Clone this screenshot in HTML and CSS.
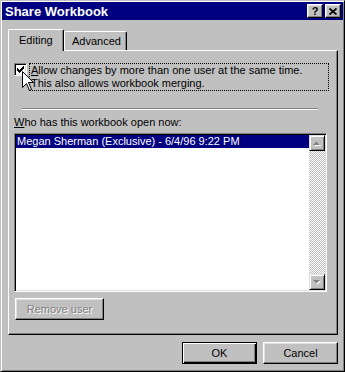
FILE: index.html
```html
<!DOCTYPE html>
<html lang="en">
<head>
  <meta charset="UTF-8" />
  <title>Share Workbook</title>
  <link rel="stylesheet" href="styles.css">
</head>
<body>
  <div class="window">
    <!-- Title bar -->
    <div class="titlebar">
      <span class="title">Share Workbook</span>
      <div class="title-buttons">
        <span class="tbtn help">?</span>
        <span class="tbtn close">
          <svg width="8" height="7" viewBox="0 0 8 7">
            <path d="M0.5 0.5 L7.5 6.5 M7.5 0.5 L0.5 6.5" stroke="#000" stroke-width="1.7" fill="none" />
          </svg>
        </span>
      </div>
    </div>

    <div class="content">
      <!-- Tabs -->
      <div class="tabs">
        <div class="tab active">Editing</div>
        <div class="tab">Advanced</div>
      </div>

      <div class="panel">
        <div class="check-row">
          <span class="checkbox">
            <svg width="7" height="7" viewBox="0 0 7 7" shape-rendering="crispEdges">
              <path d="M6 0h1v3h-1v1h-1v1h-1v1h-1v1h-1v-1h-1v-1h-1v-3h1v1h1v1h1v-1h1v-1h1z" fill="#000" />
            </svg>
          </span>
          <div class="check-label">
            <u>A</u>llow changes by more than one user at the same time.<br>
            This also allows workbook merging.
          </div>
          <svg class="cursor" width="12" height="20" viewBox="0 0 12 20">
            <path d="M0.5 0.5 V16.5 L4.5 12.5 L7.5 19.5 L9.5 18.5 L6.5 11.5 H11.5 Z" fill="#fff" stroke="#000" stroke-width="1" />
          </svg>
        </div>

        <div class="separator"></div>

        <div class="list-label"><u>W</u>ho has this workbook open now:</div>

        <div class="listbox">
          <div class="list-items">
            <div class="list-item selected">Megan Sherman (Exclusive) - 6/4/96 9:22 PM</div>
          </div>
          <div class="scrollbar">
            <span class="scroll-btn">
              <svg width="8" height="5" viewBox="0 0 8 5">
                <polygon points="1,5 8,5 4.5,1.5" fill="#fff" />
                <polygon points="0,4 7,4 3.5,0.5" fill="#808080" />
              </svg>
            </span>
            <span class="scroll-track"></span>
            <span class="scroll-btn">
              <svg width="8" height="5" viewBox="0 0 8 5">
                <polygon points="1,1 8,1 4.5,4.5" fill="#fff" />
                <polygon points="0,0 7,0 3.5,3.5" fill="#808080" />
              </svg>
            </span>
          </div>
        </div>

        <button class="btn remove" disabled>Remove user</button>
      </div>

      <div class="footer">
        <button class="btn default">OK</button>
        <button class="btn">Cancel</button>
      </div>
    </div>
  </div>
</body>
</html>
```

FILE: styles.css
```css
* {
  box-sizing: border-box;
}

html, body {
  margin: 0;
  padding: 0;
  background: #c0c0c0;
}

body {
  font-family: "Liberation Sans", Arial, sans-serif;
  font-size: 11px;
  color: #000;
}

.window {
  width: 345px;
  height: 372px;
  background: #c0c0c0;
  border: 1px solid;
  border-color: #c0c0c0 #000 #000 #c0c0c0;
  box-shadow: inset 1px 1px #fff, inset -1px -1px #808080;
  padding: 1px;
  display: flex;
  flex-direction: column;
}

/* Title bar */
.titlebar {
  height: 18px;
  background: #000080;
  color: #fff;
  display: flex;
  align-items: center;
  justify-content: space-between;
  padding: 0 2px 0 3px;
}

.title {
  font-size: 13px;
  font-weight: bold;
}

.title-buttons {
  display: flex;
  gap: 2px;
}

.tbtn {
  width: 16px;
  height: 14px;
  background: #c0c0c0;
  border: 1px solid;
  border-color: #fff #000 #000 #fff;
  box-shadow: inset -1px -1px #808080, inset 1px 1px #dfdfdf;
  display: flex;
  align-items: center;
  justify-content: center;
  color: #000;
  font-weight: bold;
  font-size: 11px;
  line-height: 1;
}

/* Dialog content */
.content {
  flex: 1;
  padding: 9px 5px 0 6px;
  display: flex;
  flex-direction: column;
}

.tabs {
  display: flex;
  align-items: flex-end;
  height: 21px;
}

.tab {
  height: 19px;
  border: 1px solid;
  border-bottom: none;
  border-color: #fff #000 #000 #fff;
  border-radius: 2px 2px 0 0;
  box-shadow: inset -1px 0 #808080;
  padding: 3px 0 0 7px;
  line-height: 13px;
  width: 63px;
}

.tab.active {
  height: 22px;
  width: 56px;
  margin-bottom: -1px;
  padding: 4px 0 0 10px;
  background: #c0c0c0;
  position: relative;
  z-index: 1;
}

.panel {
  height: 285px;
  border: 1px solid;
  border-color: #fff #000 #000 #fff;
  box-shadow: inset -1px -1px #808080;
  padding: 12px 0 0 5px;
  display: flex;
  flex-direction: column;
  align-items: flex-start;
}

.check-row {
  display: flex;
  align-items: flex-start;
  position: relative;
}

.checkbox {
  width: 13px;
  height: 13px;
  background: #fff;
  border: 1px solid;
  border-color: #808080 #fff #fff #808080;
  box-shadow: inset 1px 1px #000, inset -1px -1px #dfdfdf;
  display: flex;
  align-items: center;
  justify-content: center;
}

.check-label {
  margin-left: 2px;
  width: 300px;
  border: 1px dotted #000;
  padding-left: 1px;
  line-height: 13px;
}

.cursor {
  position: absolute;
  left: 8px;
  top: 8px;
}

.separator {
  margin: 17px 0 0 8px;
  width: 296px;
  height: 2px;
  border-top: 1px solid #808080;
  border-bottom: 1px solid #fff;
}

.list-label {
  margin-top: 6px;
  line-height: 13px;
}

.listbox {
  margin-top: 4px;
  width: 313px;
  height: 159px;
  border: 1px solid;
  border-color: #808080 #fff #fff #808080;
  box-shadow: inset 1px 1px #000, inset -1px -1px #dfdfdf;
  padding: 1px;
  display: flex;
}

.list-items {
  flex: 1;
  background: #fff;
}

.list-item {
  line-height: 13px;
  padding-left: 1px;
  white-space: nowrap;
}

.list-item.selected {
  background: #000080;
  color: #fff;
}

.scrollbar {
  width: 16px;
  display: flex;
  flex-direction: column;
  background: repeating-conic-gradient(#c0c0c0 0 25%, #fff 0 50%) 0 0 / 2px 2px;
}

.scroll-btn {
  width: 16px;
  height: 16px;
  background: #c0c0c0;
  border: 1px solid;
  border-color: #dfdfdf #000 #000 #dfdfdf;
  box-shadow: inset 1px 1px #fff, inset -1px -1px #808080;
  display: flex;
  align-items: center;
  justify-content: center;
}

.scroll-track {
  flex: 1;
}

/* Buttons */
.btn {
  font: inherit;
  color: #000;
  background: #c0c0c0;
  border: 1px solid;
  border-color: #fff #000 #000 #fff;
  box-shadow: inset -1px -1px #808080, inset 1px 1px #dfdfdf;
  height: 22px;
  width: 75px;
  padding: 0;
}

.btn.default {
  border-color: #000;
  box-shadow: inset 1px 1px #fff, inset -1px -1px #000, inset -2px -2px #808080;
}

.btn.remove {
  margin: 6px 0 0 1px;
  width: 89px;
  color: #808080;
  text-shadow: 1px 1px #fff;
}

.footer {
  margin-top: 7px;
  display: flex;
  justify-content: flex-end;
  gap: 6px;
}
```
